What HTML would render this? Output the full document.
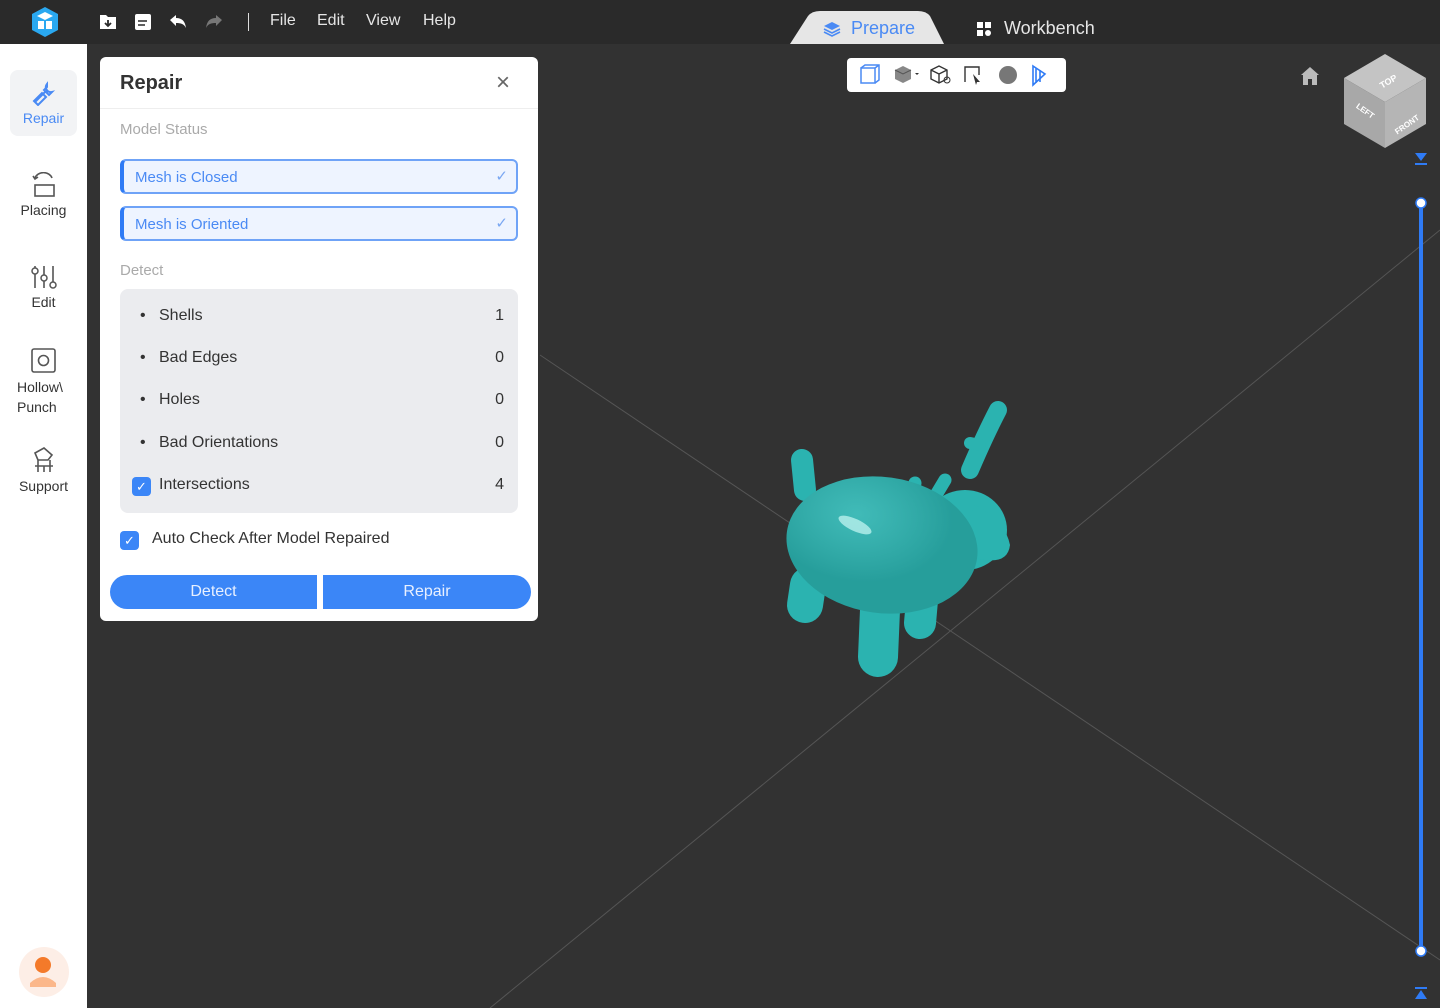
<!DOCTYPE html>
<html><head><meta charset="utf-8"><style>
*{box-sizing:border-box;margin:0;padding:0}
body{width:1440px;height:1008px;background:#323232;font-family:"Liberation Sans",sans-serif;position:relative;overflow:hidden}
.top{position:absolute;left:0;top:0;width:1440px;height:44px;background:#2a2a2a}
.menu{position:absolute;top:12px;color:#e6e6e6;font-size:16px}
.side{position:absolute;left:0;top:44px;width:87px;height:964px;background:#fff}
.si{position:absolute;width:87px;text-align:center;font-size:14px;color:#333}
.panel{position:absolute;left:100px;top:57px;width:438px;height:564px;background:#fff;border-radius:6px}
.st{position:absolute;left:20px;width:398px;height:35px;border:2px solid #6fa3f7;border-left:4px solid #2f7bf5;border-radius:6px;background:#eef4ff;color:#4a8af4;font-size:15px;padding:8px 0 0 11px}
.st span{position:absolute;right:8px;top:6px;color:#7aa7f2}
.row{position:absolute;left:39px;right:14px;font-size:16px;color:#333}
.row i{position:absolute;left:-19px;top:0;font-style:normal}
.row b{font-weight:normal;position:absolute;right:0}
.btn{position:absolute;top:518px;height:34px;background:#3b86f7;color:#e8f0ff;font-size:16px;text-align:center;line-height:34px}
.cb{position:absolute;width:19px;height:19px;background:#3b86f7;border-radius:4px;color:#fff;font-size:13px;text-align:center;line-height:19px}
</style></head><body>
<svg style="position:absolute;left:0;top:0" width="1440" height="1008">
<line x1="540" y1="355" x2="1440" y2="960" stroke="#555" stroke-width="1"/>
<line x1="490" y1="1008" x2="1440" y2="230" stroke="#555" stroke-width="1"/>
</svg>
<div class="top"></div>
<svg style="position:absolute;left:30px;top:6px" width="30" height="32"><polygon points="15,1 28,8 28,24 15,31 2,24 2,8" fill="#2aa8f0"/><polygon points="15,6 23,10 15,14 7,10" fill="#fff"/><rect x="8" y="15" width="6" height="8" fill="#fff"/><rect x="16" y="15" width="6" height="8" fill="#fff"/></svg>
<svg style="position:absolute;left:98px;top:12px" width="130" height="20"><path d="M2 3h6l2 2h8v12H2z" fill="#fff"/><path d="M10 8v6M7 11l3 3 3-3" stroke="#2a2a2a" stroke-width="1.8" fill="none"/><rect x="37" y="2" width="16" height="16" rx="2" fill="#fff"/><path d="M40 9h9M40 13h7" stroke="#2a2a2a" stroke-width="1.6"/><path d="M72 8l6-5v3c6 0 9 3 10 10-2-4-5-5-10-5v3z" fill="#fff"/><path d="M124 8l-6-5v3c-6 0-9 3-10 10 2-4 5-5 10-5v3z" fill="#777"/></svg>
<div style="position:absolute;left:248px;top:13px;width:1px;height:18px;background:#ddd"></div>
<div class="menu" style="left:270px">File</div><div class="menu" style="left:317px">Edit</div><div class="menu" style="left:366px">View</div><div class="menu" style="left:423px">Help</div>
<svg style="position:absolute;left:790px;top:10px" width="156" height="34"><path d="M0 34L18 6Q22 1 30 1H128Q136 1 140 6L154 34Z" fill="#e6e6e6"/></svg>
<svg style="position:absolute;left:822px;top:20px" width="20" height="18"><path d="M10 2l8 4-8 4-8-4z" fill="#4a8af4"/><path d="M2 9l8 4 8-4M2 12l8 4 8-4" stroke="#4a8af4" stroke-width="1.6" fill="none"/></svg>
<div class="menu" style="left:851px;top:18px;color:#4a8af4;font-size:18px">Prepare</div>
<svg style="position:absolute;left:977px;top:22px" width="16" height="16"><rect x="0" y="0" width="6" height="6" fill="#fff"/><rect x="8" y="0" width="6" height="6" fill="#fff"/><rect x="0" y="8" width="6" height="6" fill="#fff"/><circle cx="11" cy="11" r="3" fill="#fff"/></svg>
<div class="menu" style="left:1004px;top:18px;font-size:18px">Workbench</div>
<div style="position:absolute;left:847px;top:58px;width:219px;height:34px;background:#fff;border-radius:4px"></div>
<svg style="position:absolute;left:855px;top:62px" width="205" height="26"><rect x="6" y="6" width="14" height="15" fill="none" stroke="#4a8af4" stroke-width="1.5"/><path d="M6 6l4-3h14v15l-4 3M20 6l4-3" stroke="#4a8af4" fill="none" stroke-width="1.5"/><path d="M40 8l8-4 8 4v9l-8 4-8-4z" fill="#888"/><path d="M40 8l8 4 8-4" stroke="#555" fill="none"/><path d="M60 11l2 2 2-2z" fill="#333"/><path d="M76 8l8-4 8 4v9l-8 4-8-4zM76 8l8 4 8-4M84 12v9" stroke="#333" fill="none" stroke-width="1.4"/><circle cx="92" cy="18" r="3" fill="none" stroke="#333"/><path d="M110 20V5h14v8" stroke="#333" fill="none" stroke-width="1.4"/><path d="M118 12l7 8-3 0-1 3z" fill="#333"/><circle cx="153" cy="13" r="9" fill="#777"/><path d="M178 4l12 8-12 11zM181 6v15M185 8v12" stroke="#2f7bf5" fill="none" stroke-width="1.6"/></svg>
<svg style="position:absolute;left:1299px;top:65px" width="22" height="22"><path d="M11 2l9 8h-2v10h-5v-6h-4v6H4V10H2z" fill="#bbb"/></svg>
<svg style="position:absolute;left:1340px;top:52px" width="90" height="98"><polygon points="45,2 86,26 45,50 4,26" fill="#c4c4c4"/><polygon points="4,26 45,50 45,96 4,72" fill="#a8a8a8"/><polygon points="86,26 45,50 45,96 86,72" fill="#b5b5b5"/><text x="38" y="34" transform="rotate(-30 45 28)" font-size="9" fill="#fff" font-weight="bold">TOP</text><text x="14" y="60" transform="rotate(35 22 60)" font-size="8" fill="#fff" font-weight="bold">LEFT</text><text x="52" y="78" transform="rotate(-35 62 72)" font-size="8" fill="#fff" font-weight="bold">FRONT</text></svg>
<svg style="position:absolute;left:1412px;top:152px" width="18" height="850"><path d="M3 1h12l-6 8z" fill="#2f7bf5"/><rect x="3" y="11" width="12" height="2" fill="#2f7bf5"/><rect x="7" y="50" width="4" height="750" fill="#2f7bf5"/><circle cx="9" cy="51" r="5" fill="#fff" stroke="#2f7bf5" stroke-width="1.5"/><circle cx="9" cy="799" r="5" fill="#fff" stroke="#2f7bf5" stroke-width="1.5"/><path d="M3 847h12l-6-9z" fill="#2f7bf5"/><rect x="3" y="835" width="12" height="2" fill="#2f7bf5"/></svg>
<!-- deer -->
<svg style="position:absolute;left:770px;top:395px" width="260" height="290" viewBox="0 0 260 290">
<g stroke="#2bb3b0" stroke-linecap="round" fill="none">
<path d="M200 75 Q215 40 228 15" stroke-width="18"/>
<path d="M210 50 L200 48" stroke-width="12"/>
<path d="M35 95 L32 65" stroke-width="22"/>
<path d="M140 110 L145 88" stroke-width="13"/>
<path d="M160 110 L175 85" stroke-width="13"/>
<path d="M140 120 Q165 115 188 108" stroke-width="13"/>
<ellipse cx="103" cy="98" rx="12" ry="11" stroke-width="7"/>
<path d="M38 190 L35 210" stroke-width="36"/>
<path d="M110 215 L108 262" stroke-width="40"/>
<path d="M152 205 L150 228" stroke-width="32"/>
</g>
<g fill="#2bb3b0">
<ellipse cx="112" cy="150" rx="96" ry="68" transform="rotate(8 112 150)"/>
<ellipse cx="195" cy="135" rx="42" ry="40"/>
<path d="M205 110 Q235 125 240 150 Q238 168 215 165 L185 160z"/>
</g>
<ellipse cx="112" cy="150" rx="96" ry="68" transform="rotate(8 112 150)" fill="url(#g)"/>
<ellipse cx="85" cy="130" rx="18" ry="6" fill="#b8f0ec" transform="rotate(25 85 130)" opacity=".8"/>
<defs><radialGradient id="g" cx=".35" cy=".3"><stop offset="0" stop-color="#fff" stop-opacity=".1"/><stop offset="1" stop-color="#000" stop-opacity=".12"/></radialGradient></defs>
</svg>
<div class="side"></div>
<div style="position:absolute;left:10px;top:70px;width:67px;height:66px;background:#f2f3f5;border-radius:8px"></div>
<svg style="position:absolute;left:31px;top:80px" width="26" height="26"><path d="M4 22l10-10M16 4a5 5 0 0 0 5 8l-3 3-5-5 3-3z" stroke="#4a8af4" stroke-width="2" fill="none"/><path d="M3 21l4 4 8-8-4-4z" stroke="#4a8af4" stroke-width="2" fill="none"/></svg>
<div class="si" style="top:110px;color:#4a8af4">Repair</div>
<svg style="position:absolute;left:30px;top:172px" width="28" height="26"><path d="M5 6a9 8 0 0 1 17 0M3 4l2 3 3-2" stroke="#555" stroke-width="1.6" fill="none"/><rect x="5" y="13" width="19" height="11" stroke="#555" stroke-width="1.6" fill="none"/></svg>
<div class="si" style="top:202px">Placing</div>
<svg style="position:absolute;left:30px;top:264px" width="28" height="26"><path d="M5 2v22M14 2v22M23 2v22" stroke="#555" stroke-width="1.6"/><circle cx="5" cy="7" r="3" fill="#fff" stroke="#555" stroke-width="1.5"/><circle cx="14" cy="14" r="3" fill="#fff" stroke="#555" stroke-width="1.5"/><circle cx="23" cy="21" r="3" fill="#fff" stroke="#555" stroke-width="1.5"/></svg>
<div class="si" style="top:294px">Edit</div>
<svg style="position:absolute;left:30px;top:347px" width="28" height="28"><rect x="2" y="2" width="23" height="23" rx="2" stroke="#555" stroke-width="1.6" fill="none"/><circle cx="13.5" cy="13.5" r="5" stroke="#555" stroke-width="1.6" fill="none"/></svg>
<div class="si" style="top:377px;text-align:left;padding-left:17px;line-height:20px">Hollow\<br>Punch</div>
<svg style="position:absolute;left:30px;top:446px" width="28" height="28"><path d="M8 14l-3-7 9-5 8 7-4 5zM5 20h18M8 14v12M20 14v12M14 20v6" stroke="#555" stroke-width="1.6" fill="none"/></svg>
<div class="si" style="top:478px">Support</div>
<div style="position:absolute;left:19px;top:947px;width:50px;height:50px;border-radius:50%;background:#fdeee6"></div>
<svg style="position:absolute;left:27px;top:953px" width="34" height="38"><circle cx="16" cy="12" r="8" fill="#f47a2a"/><path d="M3 30q13-12 26 0v4H3z" fill="#fbb78a"/></svg>
<div class="panel">
<div style="position:absolute;left:20px;top:15px;font-size:20px;font-weight:bold;color:#333">Repair</div>
<div style="position:absolute;right:28px;top:12px;font-size:24px;color:#666">×</div>
<div style="position:absolute;left:0;right:0;top:51px;height:1px;background:#eee"></div>
<div style="position:absolute;left:20px;top:64px;font-size:15px;color:#aaa">Model Status</div>
<div class="st" style="top:102px">Mesh is Closed<span>✓</span></div>
<div class="st" style="top:149px">Mesh is Oriented<span>✓</span></div>
<div style="position:absolute;left:20px;top:205px;font-size:15px;color:#aaa">Detect</div>
<div style="position:absolute;left:20px;top:232px;width:398px;height:224px;background:#ebecef;border-radius:8px">
<div class="row" style="top:18px"><i>•</i>Shells<b>1</b></div>
<div class="row" style="top:60px"><i>•</i>Bad Edges<b>0</b></div>
<div class="row" style="top:102px"><i>•</i>Holes<b>0</b></div>
<div class="row" style="top:145px"><i>•</i>Bad Orientations<b>0</b></div>
<div class="row" style="top:187px">Intersections<b>4</b></div>
<div class="cb" style="left:12px;top:188px">✓</div>
</div>
<div class="cb" style="left:20px;top:474px">✓</div>
<div style="position:absolute;left:52px;top:473px;font-size:16px;color:#333">Auto Check After Model Repaired</div>
<div class="btn" style="left:10px;width:207px;border-radius:17px 0 0 17px">Detect</div>
<div class="btn" style="left:223px;width:208px;border-radius:0 17px 17px 0">Repair</div>
</div>
</body></html>
